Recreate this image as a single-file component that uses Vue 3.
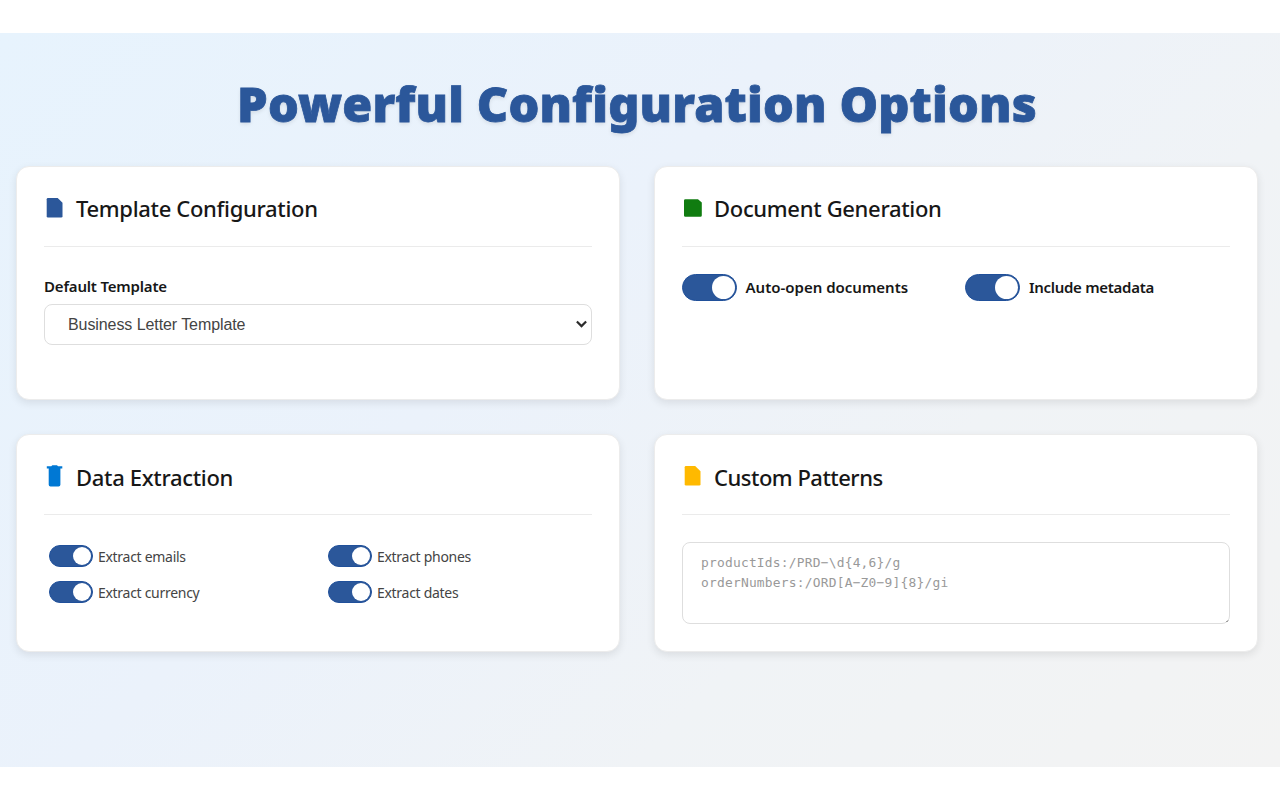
<script setup>
const extractOptions = [
  { key: 'emails', label: 'Extract emails' },
  { key: 'phones', label: 'Extract phones' },
  { key: 'currency', label: 'Extract currency' },
  { key: 'dates', label: 'Extract dates' },
]
const docOptions = [
  { key: 'auto', label: 'Auto-open documents' },
  { key: 'meta', label: 'Include metadata' },
]
</script>

<template>
  <main class="page">
    <section class="panel">
      <h1>Powerful Configuration Options</h1>
      <div class="grid">
        <article class="card">
          <header>
            <svg class="icon" viewBox="0 0 24 24"><path fill="#2b579a" d="M5 2h9.7L19.5 6.8v13.4q0 1.3-1.3 1.3H5q-1.3 0-1.3-1.3V3.3q0-1.3 1.3-1.3z" /></svg>
            <h2>Template Configuration</h2>
          </header>
          <div class="field">
            <label>Default Template</label>
            <div class="select">
              <span>Business Letter Template</span>
              <svg viewBox="0 0 10 7"><path d="M0.8 1.2 5 5.4 9.2 1.2" fill="none" stroke="#2c2c2c" stroke-width="2" /></svg>
            </div>
          </div>
        </article>

        <article class="card">
          <header>
            <svg class="icon" viewBox="0 0 24 24"><path fill="#107c10" d="M4.4 3.2h12.6L20.8 6.4v13q0 1.4-1.4 1.4h-15Q3 20.8 3 19.4V4.6q0-1.4 1.4-1.4z" /></svg>
            <h2>Document Generation</h2>
          </header>
          <div class="big-switches">
            <div v-for="o in docOptions" :key="o.key" class="row">
              <i class="switch large"></i><span :class="o.key">{{ o.label }}</span>
            </div>
          </div>
        </article>

        <article class="card">
          <header>
            <svg class="icon" viewBox="0 0 24 24"><path fill="#0078d4" d="M9.3 1.2h4.7l1 1.1h4.3v2.2h-1.9v16.2q0 1.8-1.8 1.8H7.5q-1.8 0-1.8-1.8V4.5H3.8V2.3h4.5z" /></svg>
            <h2>Data Extraction</h2>
          </header>
          <div class="small-switches">
            <div v-for="o in extractOptions" :key="o.key" class="row">
              <i class="switch"></i><span>{{ o.label }}</span>
            </div>
          </div>
        </article>

        <article class="card">
          <header>
            <svg class="icon" viewBox="0 0 24 24"><path fill="#ffb900" d="M5 2h9.2L19.5 7.3v12.9q0 1.3-1.3 1.3H5q-1.3 0-1.3-1.3V3.3q0-1.3 1.3-1.3z" /></svg>
            <h2 class="patterns">Custom Patterns</h2>
          </header>
          <div class="code">
            <div>productIds:/PRD−\d{4,6}/g</div>
            <div>orderNumbers:/ORD[A−Z0−9]{8}/gi</div>
            <svg viewBox="0 0 4 4"><path d="M1.5 3 3 1.5" stroke="#555" stroke-width="1" /></svg>
          </div>
        </article>
      </div>
    </section>
  </main>
</template>

<style>
body { background: #fff; }
</style>

<style scoped>
* { box-sizing: border-box; }
.page { height: 800px; padding: 33px 0; overflow: hidden; font-family: "Noto Sans", "Open Sans", sans-serif; color: #171717; white-space: nowrap; }
.panel { height: 734px; padding: 37px 22px 0 16px; background: linear-gradient(135deg, #e7f3fd 0%, #ebf2fb 40%, #f0f3f6 68%, #f3f3f3 100%); }
h1 { margin: 0; height: 95.5px; line-height: 66px; font-size: 48.5px; font-weight: 900; color: #2b579a; text-align: center; letter-spacing: 0.16px; -webkit-text-stroke: 0.8px #2b579a; text-shadow: 0 2px 4px rgba(0, 0, 0, .1); }
.grid { display: grid; grid-template-columns: 604px 604px; grid-template-rows: 234px 217.5px; gap: 34.5px 34px; }
.card { padding: 0 27px; background: #fff; border: 1px solid #ececec; border-radius: 13px; box-shadow: 0 3px 8px rgba(0, 0, 0, .09); }
header { display: flex; align-items: center; height: 80px; padding-top: 5px; border-bottom: 1px solid #ebebeb; }
.icon { width: 24px; height: 24px; margin: 0 0 2px -0.6px; display: block; }
h2 { margin: -1px 0 0 8.6px; font-size: 22px; line-height: 30px; font-weight: 500; letter-spacing: -0.32px; }
.patterns { letter-spacing: -0.5px; }
.field { padding-top: 28px; }
.field label { display: block; height: 29px; line-height: 23px; font-size: 15px; font-weight: 600; letter-spacing: -0.18px; }
.select { display: flex; align-items: center; justify-content: space-between; height: 41px; padding: 0 4px 0 23px; border: 1px solid #dedede; border-radius: 8px; color: #444; font: 16px "Liberation Sans", Arial, sans-serif; letter-spacing: -0.08px; }
.select span { padding-top: 1px; }
.select svg { width: 11px; height: 8px; }
.row { display: flex; align-items: center; }
.switch { position: relative; flex: none; width: 44px; height: 22px; border-radius: 11px; background: #2b579a; border: 1px solid #20509a; }
.switch::after { content: ""; position: absolute; right: 1px; top: 1px; width: 18px; height: 18px; border-radius: 50%; background: #fff; }
.large { width: 55px; height: 27px; border-radius: 14px; }
.large::after { right: 1px; top: 1px; width: 23px; height: 23px; }
.big-switches { display: grid; grid-template-columns: 283.4px 1fr; padding-top: 27px; font-size: 15px; font-weight: 600; }
.big-switches .row { height: 27px; }
.big-switches span { margin: -1px 0 0 8.5px; }
.meta { letter-spacing: -0.28px; }
.small-switches { display: grid; grid-template-columns: 279px 1fr; grid-auto-rows: 36px; padding: 23px 0 0 5px; font-size: 14px; letter-spacing: -0.29px; color: #444; }
.small-switches span { margin: 0 0 0 5px; }
.code { position: relative; height: 82px; margin-top: 27px; padding: 10px 18px; border: 1px solid #dedede; border-radius: 8px; font: 12.9px/20px "DejaVu Sans Mono", monospace; letter-spacing: 0.22px; color: #999; }
.code svg { position: absolute; right: 0; bottom: 0; width: 4px; height: 4px; }
</style>
